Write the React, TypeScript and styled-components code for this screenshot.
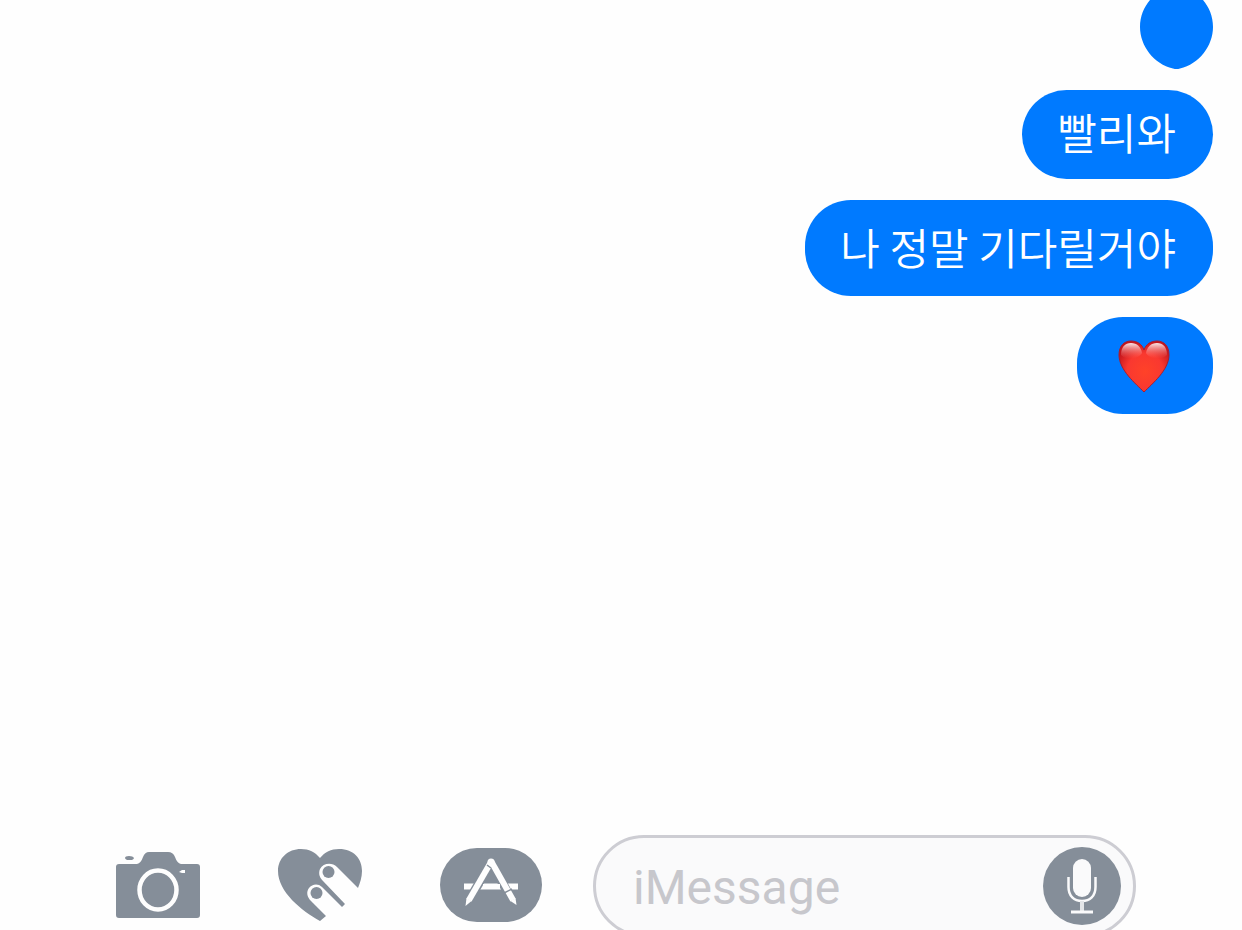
import React from "react";
import styled, { createGlobalStyle } from "styled-components";

const BLUE = "#007aff";
const GREY = "#858e99";

const GlobalStyle = createGlobalStyle`
  * { box-sizing: border-box; }
  body { margin: 0; background: #fefefe; }
`;

const Screen = styled.div`
  display: flex;
  flex-direction: column;
  height: 100vh;
  overflow: hidden;
  background: #fefefe;
`;

const Conversation = styled.ol`
  flex: 1;
  min-height: 0;
  display: flex;
  flex-direction: column;
  align-items: flex-end;
  gap: 21px;
  margin: 0;
  padding: 0 29px;
  list-style: none;
`;

const Bubble = styled.li<{ $short?: boolean }>`
  display: flex;
  align-items: center;
  flex: none;
  height: ${(p) => (p.$short ? 89 : 96)}px;
  padding: 0 37px ${(p) => (p.$short ? 8 : 4)}px 35px;
  overflow: hidden;
  border-radius: 46px;
  background: ${BLUE};
  color: #fff;
  font: 350 43px/60px "Noto Sans CJK KR", sans-serif;
  white-space: nowrap;
`;

const EmojiBubble = styled(Bubble)`
  height: 97px;
  padding: 2px 36px 0;
`;

const PartialBubble = styled.li`
  display: flex;
  flex: none;
  height: 69px;
`;

const Composer = styled.form`
  display: flex;
  align-items: flex-start;
  flex: none;
  height: 95px;
  padding-left: 106px;
  padding-right: 106px;
  overflow: hidden;
`;

const Tools = styled.div`
  display: flex;
  align-items: center;
  gap: 58px;
  height: 100px;
  margin-right: 41px;
`;

const IconButton = styled.button`
  display: flex;
  padding: 0;
  border: 0;
  background: none;
  cursor: pointer;
`;

const Field = styled.div`
  display: flex;
  align-items: center;
  flex: 1;
  min-width: 0;
  height: 102px;
  padding: 0 12px 0 37px;
  border: 3px solid #cdcdd3;
  border-radius: 51px;
  background: #fafafb;
`;

const MessageInput = styled.input`
  flex: 1;
  min-width: 0;
  height: 64px;
  padding: 2px 0 0;
  border: 0;
  outline: 0;
  background: none;
  color: #222;
  font: 400 48px/62px Roboto, sans-serif;
  &::placeholder { color: #c7c7cc; opacity: 1; }
`;

const HeartEmoji = () => (
  <svg width="64" height="56" viewBox="0 0 64 56" role="img" aria-label="heart">
    <defs>
      <radialGradient id="heartBody" cx="0.52" cy="0.6" r="0.6">
        <stop offset="0" stopColor="#ff4228" />
        <stop offset="0.6" stopColor="#f93830" />
        <stop offset="1" stopColor="#c4161d" />
      </radialGradient>
      <linearGradient id="heartShine" x1="0" y1="0" x2="0" y2="1">
        <stop offset="0" stopColor="#fff" stopOpacity="0.9" />
        <stop offset="1" stopColor="#ff7068" stopOpacity="0" />
      </linearGradient>
    </defs>
    <path d="M31 53C23 45 6 31 6 16C6 7 11 2 18 2C24 2 29 5 31 11C33 5 38 2 44 2C51 2 56 7 56 16C56 31 39 45 31 53Z" fill="url(#heartBody)" stroke="#a91d2e" strokeWidth="1" />
    <path d="M8 16C8 8 12 4 18 4C24 4 28 8 29 14C26 20 14 22 8 16Z" fill="url(#heartShine)" />
    <path d="M33 14C34 8 38 4 44 4C50 4 54 8 54 16C48 22 36 20 33 14Z" fill="url(#heartShine)" />
  </svg>
);

const CameraIcon = () => (
  <svg width="104" height="76" viewBox="0 0 104 76" aria-hidden="true">
    <g transform="translate(0 5)">
      <path d="M19 6q0-2 4-2t5 2q0 1-2 2h-5q-2-1-2-2z" fill={GREY} />
      <path d="M13 12H31Q35 11 37 5Q39 0 43 0H62Q67 0 69 5Q71 11 75 12H91Q94 12 94 15V63Q94 66 91 66H13Q10 66 10 63V15Q10 12 13 12Z" fill={GREY} />
      <ellipse cx="52" cy="38" rx="18.5" ry="19.5" fill="none" stroke="#fefefe" strokeWidth="4.5" />
      <path d="M73 20l3-2h3v3h-3z" fill="#fefefe" />
    </g>
  </svg>
);

const TouchIcon = () => (
  <svg width="104" height="76" viewBox="0 0 104 76" aria-hidden="true">
    <path d="M52 11C57 5 63 2 71 2C86 2 94 12 94 24C94 30 92 36 90 41L69 20C64 15 55 16 52 22C50 27 52 31 55 34L77 57L74 60L54 40C50 36 44 37 41 41C38 45 39 50 43 54L58 69L52 74C34 64 10 45 10 24C10 11 20 2 33 2C41 2 47 5 52 11Z" fill={GREY} />
    <circle cx="60.5" cy="25" r="6" fill={GREY} />
    <circle cx="48.5" cy="46" r="6" fill={GREY} />
  </svg>
);

const AppsIcon = () => (
  <svg width="122" height="76" viewBox="0 0 122 76" aria-hidden="true">
    <rect x="10" y="1" width="102" height="74" rx="37" fill={GREY} />
    <g fill="none" stroke="#fefefe">
      <path d="M34 39.5H88" strokeWidth="6" />
      <path d="M61 15L37 57" stroke={GREY} strokeWidth="9" />
      <path d="M61 15L84 57" stroke={GREY} strokeWidth="9" />
      <path d="M53 39.5H70" strokeWidth="5" />
      <path d="M61 15L39 53" strokeWidth="6" />
      <path d="M61 14L83 53" strokeWidth="6" />
      <path d="M57 18L61 21" stroke={GREY} strokeWidth="1.5" />
      <path d="M74 46L82 42" stroke={GREY} strokeWidth="1.5" />
    </g>
    <path d="M36.5 51l5 3-6 5z M80.500 54l5-3 1 7z" fill="#fefefe" />
    <circle cx="61" cy="15" r="3.5" fill="#fefefe" />
  </svg>
);

const MicIcon = () => (
  <svg width="78" height="78" viewBox="0 0 78 78" aria-hidden="true">
    <circle cx="39" cy="39" r="39" fill={GREY} />
    <rect x="30" y="12" width="18" height="38" rx="9" fill="#fafafb" />
    <path d="M25.5 30V40C25.5 49 31 54 39 54S52.5 49 52.5 40V30" fill="none" stroke="#fafafb" strokeWidth="2.5" />
    <path d="M39 54V65" stroke="#e3e5e8" strokeWidth="4" />
    <path d="M28 65H50" stroke="#fafafb" strokeWidth="3" />
  </svg>
);

export default function App() {
  return (
    <Screen>
      <GlobalStyle />
      <Conversation>
        <PartialBubble>
          <svg width="73" height="69" viewBox="0 0 73 69" aria-hidden="true">
            <path d="M10 0C4 7 0 16 0 27C0 46 14 64 33 68.5Q36.5 69.500 40 68.500C59 64 73 46 73 27C73 16 69 7 63 0Z" fill={BLUE} />
          </svg>
        </PartialBubble>
        <Bubble $short>빨리와</Bubble>
        <Bubble>나 정말 기다릴거야</Bubble>
        <EmojiBubble>
          <HeartEmoji />
        </EmojiBubble>
      </Conversation>
      <Composer onSubmit={(e) => e.preventDefault()}>
        <Tools>
          <IconButton type="button" aria-label="Camera">
            <CameraIcon />
          </IconButton>
          <IconButton type="button" aria-label="Digital Touch">
            <TouchIcon />
          </IconButton>
          <IconButton type="button" aria-label="Apps">
            <AppsIcon />
          </IconButton>
        </Tools>
        <Field>
          <MessageInput type="text" aria-label="iMessage" placeholder="iMessage" />
          <IconButton type="button" aria-label="Record audio">
            <MicIcon />
          </IconButton>
        </Field>
      </Composer>
    </Screen>
  );
}
